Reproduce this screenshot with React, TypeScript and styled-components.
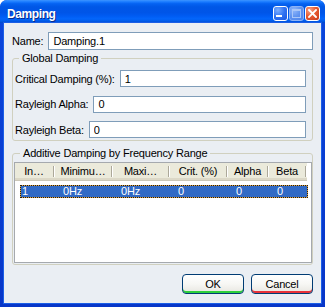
import React from "react";
import styled, { createGlobalStyle } from "styled-components";

const GlobalStyle = createGlobalStyle`
  html, body {
    margin: 0;
    padding: 0;
    background: #ffffff;
  }
  body {
    font-family: "Liberation Sans", Arial, sans-serif;
    font-size: 11px;
    letter-spacing: -0.2px;
    color: #000;
  }
`;

const Window = styled.div`
  width: 325px;
  height: 307px;
  display: flex;
  flex-direction: column;
  background: #0a3fd6;
  border-radius: 7px 7px 0 0;
  overflow: hidden;
`;

const TitleBar = styled.div`
  height: 23px;
  flex: none;
  box-sizing: border-box;
  display: flex;
  align-items: center;
  padding: 4px 5px 0 7px;
  background: linear-gradient(
    to bottom,
    #3d95ff 0%,
    #1a7bff 8%,
    #0563f2 16%,
    #0057e6 30%,
    #0055e8 55%,
    #005cf3 70%,
    #0366fb 82%,
    #005ae8 92%,
    #0046c8 100%
  );
`;

const Title = styled.div`
  flex: 1;
  color: #fff;
  font-weight: bold;
  font-size: 12px;
  letter-spacing: -0.4px;
  text-shadow: 1px 1px 0 #0a2a8a;
`;

const CaptionButtons = styled.div`
  display: flex;
  gap: 1px;
`;

const CaptionButton = styled.div<{ $kind: "min" | "max" | "close" }>`
  width: 15px;
  height: 15px;
  box-sizing: border-box;
  border-radius: 3px;
  border: 1px solid ${({ $kind }) => ($kind === "max" ? "#8db3f6" : "#ffffff")};
  display: flex;
  align-items: center;
  justify-content: center;
  background: ${({ $kind }) =>
    $kind === "close"
      ? "radial-gradient(circle at 30% 25%, #f6a58a 0%, #e75b32 45%, #c7391a 100%)"
      : $kind === "max"
      ? "radial-gradient(circle at 30% 25%, #8fb6fb 0%, #5f93f0 50%, #4d82ea 100%)"
      : "radial-gradient(circle at 30% 25%, #7eb0ff 0%, #2f72f2 50%, #1c58e0 100%)"};
`;

const MinBar = styled.div`
  width: 6px;
  height: 2px;
  background: #fff;
  align-self: flex-end;
  margin: 0 4px 3px 0;
`;

const MaxBox = styled.div`
  width: 7px;
  height: 6px;
  border: 1px solid #a9c6f8;
  border-top-width: 2px;
`;

const Frame = styled.div`
  flex: 1;
  display: flex;
  padding: 0 4px 4px;
  background: linear-gradient(to bottom, #0a45db, #0836c8);
`;

const Client = styled.div`
  flex: 1;
  display: flex;
  flex-direction: column;
  padding: 9px 8px 9px 8px;
  background: #eaeef3;
  box-shadow: 0 0 0 1px #1b5ee6;
`;

const FieldRow = styled.div<{ $height?: number }>`
  display: flex;
  align-items: center;
  gap: 5px;
  height: ${({ $height }) => $height ?? 17}px;
  flex: none;
`;

const Label = styled.span`
  white-space: nowrap;
`;

const TextInput = styled.input`
  flex: 1;
  min-width: 0;
  height: 100%;
  box-sizing: border-box;
  border: 1px solid #7f9db9;
  background: #fff;
  padding: 0 4px;
  margin: 0;
  font: inherit;
  font-size: 11px;
  letter-spacing: -0.2px;
  color: #000;
  outline: none;
`;

const Group = styled.fieldset<{ $pad: string; $grow?: boolean }>`
  margin: 0;
  min-width: 0;
  border: 1px solid #d0d0bf;
  border-radius: 3px;
  padding: ${({ $pad }) => $pad};
  display: flex;
  flex-direction: column;
  flex: ${({ $grow }) => ($grow ? "1" : "none")};
`;

const Legend = styled.legend<{ $indent: number }>`
  font-size: 11px;
  line-height: 13px;
  padding: 0 3px;
  margin-left: ${({ $indent }) => $indent}px;
  color: #000;
`;

const Rows = styled.div`
  display: flex;
  flex-direction: column;
  gap: 8.5px;
`;

const ListBox = styled.div`
  flex: 1;
  border: 1px solid #a5a9ae;
  background: #fff;
  display: flex;
  flex-direction: column;
`;

const columns = [40, 58, 57, 58, 41, 38];

const HeaderRow = styled.div`
  display: grid;
  grid-template-columns: ${columns.map((c) => c + "px").join(" ")};
  width: 292px;
  height: 18px;
  box-sizing: border-box;
  background: #ebeadb;
  border-bottom: 1px solid #cbc7b8;
  box-shadow: inset 0 -2px 0 #dcd8c7;
`;

const HeaderCell = styled.div`
  display: flex;
  align-items: center;
  justify-content: center;
  padding: 0 2px 2px 0;
  white-space: nowrap;
  overflow: hidden;
  background-image: linear-gradient(#aca899, #aca899), linear-gradient(#ffffff, #ffffff);
  background-size: 1px 11px, 1px 11px;
  background-position: calc(100% - 1px) 3px, 100% 3px;
  background-repeat: no-repeat;
`;

const DataRow = styled.div`
  display: grid;
  grid-template-columns: 35px 58px 57px 58px 41px 39px;
  width: 288px;
  height: 13px;
  box-sizing: border-box;
  margin: 4px 0 0 5px;
  border: 1px dotted #1d1d1d;
  background: linear-gradient(#316ac5, #316ac5) padding-box,
    linear-gradient(#e3a23d, #e3a23d) border-box;
  color: #fff;
  line-height: 11px;
`;

const DataCell = styled.div<{ $first?: boolean }>`
  padding-left: ${({ $first }) => ($first ? 1 : 7)}px;
  white-space: nowrap;
`;

const ButtonBar = styled.div`
  display: flex;
  justify-content: flex-end;
  gap: 7px;
  margin-top: 9px;
  flex: none;
`;

const DialogButton = styled.button<{ $accent: string }>`
  width: 62px;
  height: 20px;
  box-sizing: border-box;
  margin: 0;
  padding: 0 0 1px;
  border: 1px solid #003c74;
  border-radius: 4px;
  background: linear-gradient(to bottom, #ffffff 0%, #f7f7f4 50%, #ecebe6 85%, #dedbd2 100%);
  box-shadow: inset 0 -2px 0 ${({ $accent }) => $accent};
  font-family: "Liberation Sans", Arial, sans-serif;
  font-size: 11px;
  letter-spacing: -0.2px;
  color: #000;
`;

const headers = ["In…", "Minimu…", "Maxi…", "Crit. (%)", "Alpha", "Beta"];
const values = ["1", "0Hz", "0Hz", "0", "0", "0"];

const CloseIcon = () => (
  <svg width="9" height="9" viewBox="0 0 9 9">
    <path d="M1 1 L8 8 M8 1 L1 8" stroke="#fff" strokeWidth="1.8" strokeLinecap="square" />
  </svg>
);

const App: React.FC = () => {
  return (
    <>
      <GlobalStyle />
      <Window>
        <TitleBar>
          <Title>Damping</Title>
          <CaptionButtons>
            <CaptionButton $kind="min">
              <MinBar />
            </CaptionButton>
            <CaptionButton $kind="max">
              <MaxBox />
            </CaptionButton>
            <CaptionButton $kind="close">
              <CloseIcon />
            </CaptionButton>
          </CaptionButtons>
        </TitleBar>
        <Frame>
          <Client>
            <FieldRow $height={18}>
              <Label>Name:</Label>
              <TextInput readOnly value="Damping.1" />
            </FieldRow>

            <Group $pad="5px 6px 2px 2px" style={{ marginTop: 2 }}>
              <Legend $indent={4}>Global Damping</Legend>
              <Rows>
                <FieldRow>
                  <Label>Critical Damping (%):</Label>
                  <TextInput readOnly value="1" />
                </FieldRow>
                <FieldRow>
                  <Label>Rayleigh Alpha:</Label>
                  <TextInput readOnly value="0" />
                </FieldRow>
                <FieldRow>
                  <Label>Rayleigh Beta:</Label>
                  <TextInput readOnly value="0" />
                </FieldRow>
              </Rows>
            </Group>

            <Group $pad="2px 0 1px 1px" $grow style={{ marginTop: 6 }}>
              <Legend $indent={6}>Additive Damping by Frequency Range</Legend>
              <ListBox>
                <HeaderRow>
                  {headers.map((h) => (
                    <HeaderCell key={h}>{h}</HeaderCell>
                  ))}
                </HeaderRow>
                <DataRow>
                  {values.map((v, i) => (
                    <DataCell key={i} $first={i === 0}>
                      {v}
                    </DataCell>
                  ))}
                </DataRow>
              </ListBox>
            </Group>

            <ButtonBar>
              <DialogButton $accent="#2ed03c">OK</DialogButton>
              <DialogButton $accent="#e8323a">Cancel</DialogButton>
            </ButtonBar>
          </Client>
        </Frame>
      </Window>
    </>
  );
};

export default App;
